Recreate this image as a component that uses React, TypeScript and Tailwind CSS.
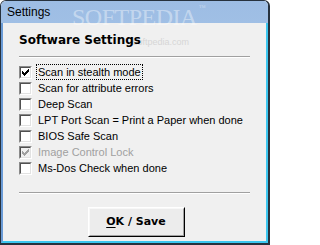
import type { ReactNode } from 'react'

// 7x7 classic check bitmap
const CHECK = [
  '......X',
  '.....XX',
  'X...XXX',
  'XX.XXX.',
  'XXXXX..',
  '.XXX...',
  '..X....',
]

function CheckMark({ color }: { color: string }) {
  return (
    <svg width="7" height="7" viewBox="0 0 7 7" shapeRendering="crispEdges">
      {CHECK.flatMap((row, y) =>
        row.split('').map((c, x) =>
          c === 'X' ? <rect key={`${x}-${y}`} x={x} y={y} width="1" height="1" fill={color} /> : null,
        ),
      )}
    </svg>
  )
}

function CheckBox({
  label,
  checked = false,
  disabled = false,
  focused = false,
}: {
  label: string
  checked?: boolean
  disabled?: boolean
  focused?: boolean
}) {
  return (
    <div className="flex h-[16px] items-center">
      <div className="h-[13px] w-[13px] shrink-0 border border-t-[#8a8a8a] border-l-[#8a8a8a] border-b-white border-r-white">
        <div
          className={`flex h-full w-full items-center justify-center border border-t-[#505050] border-l-[#505050] border-b-[#e2e2e2] border-r-[#e2e2e2] ${
            disabled ? 'bg-[#f0f0f0]' : 'bg-white'
          }`}
        >
          {checked && <CheckMark color={disabled ? '#a0a0a0' : '#000000'} />}
        </div>
      </div>
      <span
        className={`ml-[4px] whitespace-nowrap px-[1px] text-[11px] leading-[14px] ${
          focused ? 'border border-dotted border-black' : 'border border-transparent'
        } ${disabled ? 'text-[#a0a0a0]' : 'text-black'}`}
      >
        {label}
      </span>
    </div>
  )
}

function Separator() {
  return <div className="h-[2px] border-t border-t-[#a0a0a0] border-b border-b-white" />
}

function Client({ children }: { children: ReactNode }) {
  return <div className="relative flex-1 bg-[#f0f0f0]">{children}</div>
}

export default function App() {
  return (
    <div className="relative h-[245px] w-[270px] overflow-hidden rounded-t-[6px] border-l border-t border-r-2 border-b-2 border-[#27323e] font-['Liberation_Sans',Arial,sans-serif] text-[12px]">
      <div className="flex h-full flex-col bg-[linear-gradient(#9dbde4,#bcd3ee)]">
        {/* 타이틀 바 */}
        <div className="flex h-[22px] shrink-0 items-center pl-[6px] text-[12px] text-black">Settings</div>

        <div className="flex flex-1 flex-col border-l-2 border-r-2 border-b-2 border-l-[#6a9bd6] border-r-[#3cc6ef] border-b-[#3cc6ef]">
          <Client>
            {/* 워터마크 */}
            <div className="pointer-events-none absolute left-[130px] top-[13px] font-['Liberation_Sans',Arial,sans-serif] text-[9px] text-[#d6d6d6]">
              softpedia.com
            </div>

            <div className="relative flex flex-col px-[16px] pt-[10px]">
              <div className="font-['DejaVu_Sans',Verdana,sans-serif] text-[12px] font-bold leading-[14px] text-black">
                Software Settings
              </div>
              <div className="mt-[9px]">
                <Separator />
              </div>

              <div className="mt-[6px] flex flex-col">
                <CheckBox label="Scan in stealth mode" checked focused />
                <CheckBox label="Scan for attribute errors" />
                <CheckBox label="Deep Scan" />
                <CheckBox label="LPT Port Scan = Print a Paper when done" />
                <CheckBox label="BIOS Safe Scan" />
                <CheckBox label="Image Control Lock" checked disabled />
                <CheckBox label="Ms-Dos Check when done" />
              </div>

              <div className="mt-[16px]">
                <Separator />
              </div>

              <div className="mt-[13px] flex justify-center">
                <button className="ml-[3px] h-[30px] w-[97px] border border-t-white border-l-white border-r-black border-b-black bg-[#ececec]">
                  <div className="flex h-full w-full items-center justify-center border border-t-[#f8f8f8] border-l-[#f8f8f8] border-r-[#a0a0a0] border-b-[#a0a0a0] font-['DejaVu_Sans',Verdana,sans-serif] text-[11px] font-bold text-black">
                    <span className="underline underline-offset-2">O</span>K / Save
                  </div>
                </button>
              </div>
            </div>
          </Client>
        </div>
      </div>

      {/* 워터마크 */}
      <div className="pointer-events-none absolute left-[71px] top-[4px] whitespace-nowrap font-['Liberation_Serif',serif] text-[24px] leading-none tracking-[-0.5px] text-white/40">
        SOFTPEDIA<span className="ml-[2px] align-top text-[7px]">™</span>
      </div>
    </div>
  )
}
